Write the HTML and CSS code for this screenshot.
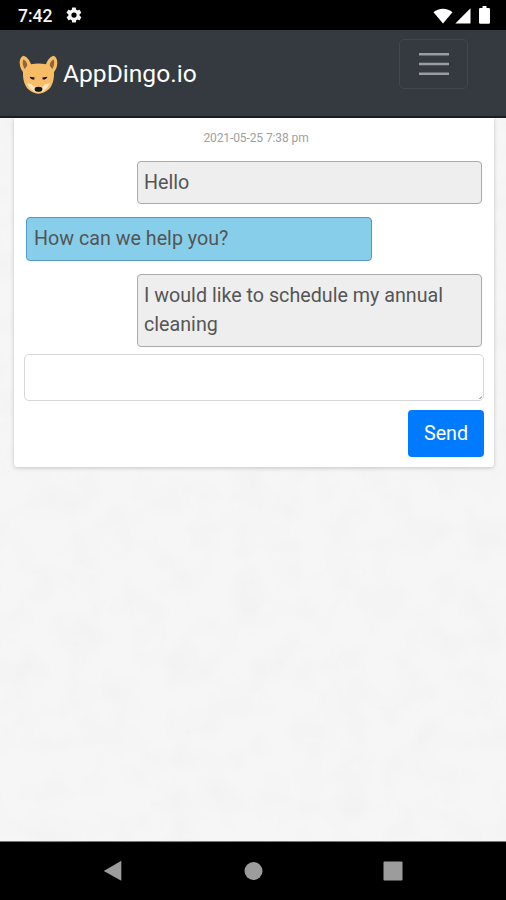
FILE: index.html
```html
<!DOCTYPE html>
<html lang="en">
<head>
<meta charset="utf-8">
<title>AppDingo.io</title>
<link rel="stylesheet" href="styles.css">
</head>
<body>
<div class="statusbar">
  <span class="clock">7:42</span>
  <svg class="gear" viewBox="0 0 24 24"><path fill-rule="evenodd" d="M19.4 13a7.600 7.600 0 0 0 0-2l2.100-1.600a.5.5 0 0 0 .1-.6l-2-3.500a.5.5 0 0 0-.6-.2l-2.500 1a7.300 7.300 0 0 0-1.700-1l-.4-2.600a.5.5 0 0 0-.5-.4h-4a.5.500 0 0 0-.5.4L9 5.100a7.300 7.300 0 0 0-1.700 1l-2.500-1a.5.500 0 0 0-.6.2l-2 3.500a.5.500 0 0 0 .1.600L4.500 11a7.600 7.600 0 0 0 0 2l-2.100 1.600a.5.500 0 0 0-.1.600l2 3.500c.1.200.4.300.6.200l2.500-1c.5.400 1.100.7 1.700 1l.4 2.600c0 .3.200.4.500.4h4c.2 0 .5-.2.500-.4l.4-2.600a7.300 7.300 0 0 0 1.700-1l2.500 1c.2.100.5 0 .6-.2l2-3.500a.5.500 0 0 0-.1-.600zM12 15.500a3.500 3.500 0 1 1 0-7 3.500 3.500 0 0 1 0 7z"/></svg>
  <div class="indicators">
    <svg width="20" height="16" viewBox="0 0 20 16"><path d="M.5 4.300C5.500-.6 14.500-.6 19.500 4.300L10 15.600z"/></svg>
    <svg width="16" height="16" viewBox="0 0 16 16"><path d="M15.500.3v15.300H.3z"/></svg>
    <svg class="battery" width="11" height="18" viewBox="0 0 11 18"><path d="M3.500 0h4v2h2.300q1.200 0 1.200 1.200v13.300q0 1.200-1.200 1.200H1.200Q0 17.700 0 16.500V3.200Q0 2 1.200 2h2.300z"/></svg>
  </div>
</div>
<header class="navbar">
  <div class="brand">
    <svg class="logo" width="39" height="39" viewBox="0 0 39 39">
      <path fill="#f6bd66" d="M4.500.8C7.500 1.500 10.500 5 12 9.200q7.500-1.200 15 0C28.500 5 31.500 1.500 34.500.8c2.500.7 4 4 3.800 7.700-.2 3.500-1.500 6.500-3.300 8.500.2 5-.5 9.500-2.500 13.500-2 4.500-8 8.200-13 8.200s-11-3.700-13-8.200C4.500 26.500 3.800 22 4 17 2.200 15 .9 12 .7 8.500.5 4.800 2 1.500 4.500.8z"/>
      <path fill="#93633c" d="M4.200 4.500C6.400 5 8 7.500 8.300 10.500L5.800 14C3.900 11.500 3.200 7.500 4.200 4.500zm30.600 0c-2.200.5-3.800 3-4.100 6l2.500 3.500c1.900-2.500 2.600-6.500 1.600-9.500z"/>
      <path fill="#fae5c6" d="M8.300 28.500q4.500-.5 6.700 3.200h9q2.200-3.700 6.700-3.200c-1 3-3 5-5.200 6.800-3.500 3-8.500 3-12 0-2.200-1.800-4.200-3.800-5.200-6.800z"/>
      <path fill="#171616" d="m10.700 21.800 4.900.8-.3 2q-4 .2-4.600-2.800zm17.600 0-4.900.8.3 2q4 .2 4.600-2.800zM16 32.500q3.500-1.300 7 0 1.200 2.700-1 3.900-2.500.8-5 0-2.200-1.200-1-3.900z"/>
    </svg>
    <span class="brand-name">AppDingo.io</span>
  </div>
  <button class="toggler" aria-label="Menu">
    <svg width="32" height="26" viewBox="0 0 32 26"><path d="M1 3.200h30M1 13h30M1 22.800h30"/></svg>
  </button>
</header>
<main class="page">
  <svg class="texture" width="506" height="725">
    <filter id="plaster"><feTurbulence type="fractalNoise" baseFrequency=".03" numOctaves="5" seed="8"/><feColorMatrix values="0 0 0 0 .55  0 0 0 0 .55  0 0 0 0 .55  .14 0 0 0 -.055"/></filter>
    <rect width="506" height="725" filter="url(#plaster)"/>
  </svg>
  <section class="card">
    <time class="stamp">2021-05-25 7:38 pm</time>
    <div class="bubble sent">Hello</div>
    <div class="bubble received">How can we help you?</div>
    <div class="bubble sent">I would like to schedule my annual cleaning</div>
    <div class="field" role="textbox"><svg width="4" height="4" viewBox="0 0 4 4"><path d="M1.500 4 4 1.500"/></svg></div>
    <button class="send">Send</button>
  </section>
</main>
<nav class="softkeys">
  <svg width="20" height="22" viewBox="0 0 20 22"><path d="M18.300.8v20L.8 11z"/></svg>
  <svg width="20" height="20" viewBox="0 0 20 20"><circle cx="10.500" cy="10" r="9"/></svg>
  <svg width="20" height="20" viewBox="0 0 20 20"><rect x=".5" y=".5" width="19" height="19" rx="1"/></svg>
</nav>
</body>
</html>
```
FILE: styles.css
```css
* { box-sizing: border-box; }

body {
  margin: 0;
  height: 900px;
  display: flex;
  flex-direction: column;
  overflow: hidden;
  font-family: Roboto, "Liberation Sans", sans-serif;
  font-size: 19.7px;
  line-height: 29.5px;
  background: #f6f6f6;
}

svg { display: block; flex: none; }
button { font: inherit; }

.statusbar {
  flex: none;
  height: 30px;
  padding: 2px 16px 0 18px;
  display: flex;
  align-items: center;
  background: #000;
  color: #f5f5f5;
}
.clock { width: 47px; font-size: 17.5px; font-weight: 500; padding-top: 1px; }
.gear { width: 18px; height: 18px; margin-top: -2px; fill: #f5f5f5; }
.indicators { margin-left: auto; display: flex; align-items: center; fill: #fff; gap: 2px; }
.battery { margin-left: 6px; margin-top: -2px; }

.navbar {
  flex: none;
  height: 88px;
  padding: 9px 38px 0 19px;
  display: flex;
  align-items: flex-start;
  justify-content: space-between;
  background: #343a40;
  border-bottom: 2px solid #1b1d24;
}
.brand { display: flex; align-items: center; gap: 5px; padding-top: 16px; }
.brand-name { color: #fff; font-size: 24.6px; line-height: 36px; margin-top: -2px; }
.toggler {
  width: 69px;
  height: 50px;
  padding: 0;
  display: grid;
  place-items: center;
  background: none;
  border: 1px solid #42484c;
  border-radius: 5px;
}
.toggler path { stroke: #999ca0; stroke-width: 2.4; }

.page { flex: 1; position: relative; padding: 0 12px 0 14px; }
.texture { position: absolute; left: 0; top: 0; }

.card {
  position: relative;
  height: 349px;
  padding: 5.5px 10px 0;
  display: flex;
  flex-direction: column;
  background: #fff;
  border-radius: 0 0 3px 3px;
  box-shadow: 0 1px 4px rgba(0, 0, 0, .2);
}
.stamp {
  align-self: center;
  margin-left: 4px;
  height: 37px;
  font-size: 12px;
  letter-spacing: -.1px;
  color: #a0a0a0;
}
.bubble {
  width: 346px;
  padding: 6px;
  margin-bottom: 13px;
  border: 1px solid #aaa;
  border-radius: 4px;
  color: #555;
}
.sent { align-self: flex-end; width: 345px; margin-right: 2px; background: #eee; }
.received { margin-left: 2px; padding-left: 7px; background: #87ceeb; border-color: #529ac0; }
.field {
  height: 47px;
  margin-top: -6px;
  display: flex;
  align-items: flex-end;
  justify-content: flex-end;
  padding: 1px;
  border: 1px solid #d5d7da;
  border-radius: 5px;
}
.field path { stroke: #555; stroke-width: .9; }
.send {
  align-self: flex-end;
  width: 76px;
  height: 47px;
  margin-top: 9px;
  padding: 1px 0 0;
  border: 0;
  border-radius: 4px;
  background: #007bff;
  color: #fff;
}

.softkeys {
  flex: none;
  height: 59px;
  padding: 0 103px;
  display: flex;
  align-items: center;
  justify-content: space-between;
  background: #000;
  border-top: 1px solid #777;
  fill: #9c9c9c;
}
```
